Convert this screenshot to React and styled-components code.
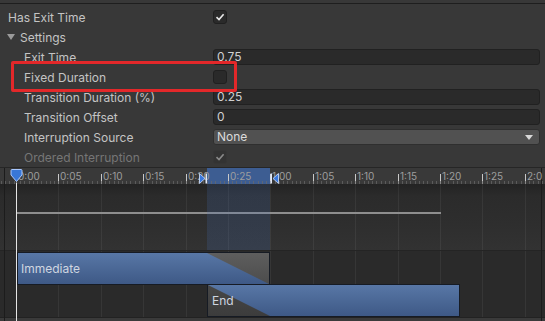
import React from "react";
import styled, { createGlobalStyle } from "styled-components";

const GlobalStyle = createGlobalStyle`
  html, body {
    margin: 0;
    padding: 0;
    background: #383838;
    overflow: hidden;
  }
  body {
    font-family: Inter, "Noto Sans", "Liberation Sans", sans-serif;
    font-size: 12px;
    color: #c4c4c4;
  }
`;

const TICK_START = 16;
const TICK_STEP = 42.4;
const TICKS = ["0:00", "0:05", "0:10", "0:15", "0:20", "0:25", "1:00", "1:05", "1:10", "1:15", "1:20", "1:25", "2:0"];

const Page = styled.div`
  width: 545px;
  height: 321px;
  position: relative;
  display: flex;
  flex-direction: column;
  overflow: hidden;
`;

const TopEdge = styled.div`
  height: 3px;
  border-bottom: 1px solid #1e1e1e;
  margin-bottom: 3px;
`;

const Inspector = styled.div`
  display: flex;
  flex-direction: column;
  padding-right: 5px;
`;

const Row = styled.div`
  height: 20px;
  display: flex;
  align-items: center;
  padding-left: ${(p) => (p.$indent ? 24 : 8)}px;
`;

const Label = styled.div`
  width: ${(p) => (p.$indent ? 189 : 205)}px;
  flex: none;
  white-space: nowrap;
  color: ${(p) => (p.$disabled ? "#767676" : "#c4c4c4")};
`;

const Foldout = styled.div`
  display: flex;
  align-items: center;
  gap: 5px;
  margin-left: -1px;
`;

const Arrow = styled.span`
  width: 0;
  height: 0;
  border-left: 4px solid transparent;
  border-right: 4px solid transparent;
  border-top: 6px solid #9a9a9a;
`;

const Field = styled.div`
  flex: 1;
  height: 16px;
  box-sizing: border-box;
  background: #2a2a2a;
  border: 1px solid #212121;
  border-radius: 3px;
  padding: 0 3px;
  line-height: 14px;
  color: #d0d0d0;
`;

const Dropdown = styled(Field)`
  background: #515151;
  border-color: #2f2f2f;
  display: flex;
  align-items: center;
  justify-content: space-between;
  color: #dcdcdc;
  padding-right: 6px;
`;

const DropArrow = styled.span`
  width: 0;
  height: 0;
  border-left: 4px solid transparent;
  border-right: 4px solid transparent;
  border-top: 5px solid #d8d8d8;
`;

const Check = styled.div`
  width: 14px;
  height: 14px;
  box-sizing: border-box;
  background: ${(p) => (p.$disabled ? "#333" : "#2a2a2a")};
  border: 1px solid ${(p) => (p.$disabled ? "#363636" : "#202020")};
  border-radius: 3px;
  display: flex;
  align-items: center;
  justify-content: center;
`;

const Highlight = styled.div`
  position: absolute;
  left: 11px;
  top: 61px;
  width: 226px;
  height: 31px;
  box-sizing: border-box;
  border: 3px solid #e3282a;
  border-radius: 2px;
  pointer-events: none;
`;

const Timeline = styled.div`
  position: relative;
  flex: 1;
  display: flex;
  flex-direction: column;
  border-top: 1px solid #262626;
  background: #2a2a2a;
`;

const Ruler = styled.div`
  position: relative;
  height: 16px;
  background: #393939;
  &::after {
    content: "";
    position: absolute;
    left: 0;
    right: 0;
    bottom: 0;
    height: 3px;
    background: repeating-linear-gradient(
      to right,
      #6a6a6a 0 1px,
      transparent 1px 4.24px
    );
    background-position: 16px 0;
    opacity: 0.7;
    z-index: 2;
  }
`;

const Tick = styled.div`
  position: absolute;
  top: 0;
  bottom: 0;
  display: flex;
  align-items: center;
  gap: 1px;
  font-size: 10px;
  color: #9e9e9e;
  z-index: 2;
  &::before {
    content: "";
    width: 1px;
    height: 10px;
    margin-top: 5px;
    background: #c8c8c8;
  }
`;

const CurveArea = styled.div`
  position: relative;
  height: 66px;
  background: linear-gradient(#232323, #2b2b2b 12px, #2e2e2e 40px, #323232);
  border-bottom: 1px solid #242424;
`;

const Curve = styled.div`
  position: absolute;
  left: 16px;
  top: 28px;
  width: 425px;
  height: 2px;
  background: #8e8e8e;
`;

const Tracks = styled.div`
  position: relative;
  height: 66px;
  background: #2a2a2a;
`;

const BottomStrip = styled.div`
  flex: 1;
  background: #3a3a3a;
  border-top: 1px solid #222;
`;

const GridLine = styled.div`
  position: absolute;
  top: 0;
  bottom: 0;
  width: 1px;
  background: rgba(255, 255, 255, 0.06);
`;

const Selection = styled.div`
  position: absolute;
  left: 207px;
  width: 63px;
  top: 0;
  height: 82px;
  z-index: 1;
  background: linear-gradient(#3d5d92 0 16px, rgba(70, 110, 180, 0.2) 16px);
  pointer-events: none;
`;

const Bar = styled.div`
  position: absolute;
  box-sizing: border-box;
  background: linear-gradient(#5877a6, #3e5986);
  border: 1px solid #161b24;
  color: #cfd6e0;
  font-size: 12px;
  padding-left: ${(p) => p.$pad}px;
  display: flex;
  align-items: center;
  overflow: hidden;
`;

const Fade = styled.div`
  position: absolute;
  top: 0;
  bottom: 0;
  right: 0;
  width: 62px;
  background: ${(p) => p.$shade};
  clip-path: ${(p) => p.$clip};
`;

const BarText = styled.span`
  position: relative;
`;

const EdgeLine = styled.div`
  position: absolute;
  top: 0;
  bottom: 0;
  width: 1px;
  background: #1c1c1c;
`;

const Playhead = styled.div`
  position: absolute;
  left: 10px;
  top: 1px;
  bottom: 0;
  width: 13px;
  display: flex;
  flex-direction: column;
  align-items: center;
  z-index: 3;
  &::after {
    content: "";
    flex: 1;
    width: 1px;
    background: #e6e6e6;
  }
`;

const Marker = styled.div`
  position: absolute;
  top: 5px;
  left: ${(p) => p.$x}px;
  z-index: 3;
  display: flex;
`;

function Checkmark({ color = "#e8e8e8" }) {
  return (
    <svg width="10" height="10" viewBox="0 0 10 10">
      <path d="M1.5 5.2 L4 7.6 L8.6 2.2" fill="none" stroke={color} strokeWidth="1.6" />
    </svg>
  );
}

function PropRow({ label, indent, disabled, children }) {
  return (
    <Row $indent={indent}>
      <Label $indent={indent} $disabled={disabled}>{label}</Label>
      {children}
    </Row>
  );
}

export default function App() {
  const xs = TICKS.map((_, i) => TICK_START + i * TICK_STEP);
  const grid = xs.slice(1).map((x) => <GridLine key={x} style={{ left: Math.round(x) }} />);

  return (
    <Page>
      <GlobalStyle />
      <TopEdge />
      <Inspector>
        <PropRow label="Has Exit Time">
          <Check>
            <Checkmark />
          </Check>
        </PropRow>
        <Row>
          <Foldout>
            <Arrow />
            <span>Settings</span>
          </Foldout>
        </Row>
        <PropRow label="Exit Time" indent>
          <Field>0.75</Field>
        </PropRow>
        <PropRow label="Fixed Duration" indent>
          <Check />
        </PropRow>
        <PropRow label="Transition Duration (%)" indent>
          <Field>0.25</Field>
        </PropRow>
        <PropRow label="Transition Offset" indent>
          <Field>0</Field>
        </PropRow>
        <PropRow label="Interruption Source" indent>
          <Dropdown>
            None
            <DropArrow />
          </Dropdown>
        </PropRow>
        <PropRow label="Ordered Interruption" indent disabled>
          <Check $disabled>
            <Checkmark color="#8a8a8a" />
          </Check>
        </PropRow>
      </Inspector>

      <Timeline>
        <Selection />
        <Ruler>
          {TICKS.map((t, i) => (
            <Tick key={t} style={{ left: Math.round(xs[i]) }}>
              {t}
            </Tick>
          ))}
        </Ruler>
        <Marker $x={199}>
          <svg width="9" height="11" viewBox="0 0 9 11">
            <path d="M0.5 0.5 L6 5.5 L0.5 10.5 Z" fill="#3a78dc" stroke="#d6e4ff" strokeWidth="0.8" />
            <rect x="6.5" y="0.5" width="1.5" height="10" fill="#e0e8f8" />
          </svg>
        </Marker>
        <Marker $x={270}>
          <svg width="9" height="11" viewBox="0 0 9 11">
            <rect x="0.5" y="0.5" width="1.5" height="10" fill="#e0e8f8" />
            <path d="M8.5 0.5 L3 5.5 L8.5 10.5 Z" fill="#3a78dc" stroke="#d6e4ff" strokeWidth="0.8" />
          </svg>
        </Marker>
        <CurveArea>
          {grid}
          <Curve />
        </CurveArea>
        <Tracks>
          {grid}
          <Bar $pad={3} style={{ left: 17, top: 1, width: 253, height: 33 }}>
            <Fade $shade="linear-gradient(#5e5e5e, #4c4c4c)" $clip="polygon(0 0, 100% 0, 100% 100%)" />
            <BarText>Immediate</BarText>
          </Bar>
          <Bar $pad={4} style={{ left: 207, top: 33, width: 253, height: 33 }}>
            <Fade
              $shade="linear-gradient(#474747, #3c3c3c)"
              $clip="polygon(0 0, 0 100%, 100% 100%)"
              style={{ left: 0, right: "auto" }}
            />
            <BarText>End</BarText>
          </Bar>
        </Tracks>
        <BottomStrip />
        <EdgeLine style={{ left: 4 }} />
        <EdgeLine style={{ left: 541 }} />
        <Playhead>
          <svg width="13" height="14" viewBox="0 0 13 14">
            <path d="M1 1.5 Q1 0.5 2 0.5 H11 Q12 0.5 12 1.5 V6 L6.5 12.5 L1 6 Z" fill="#3877d8" stroke="#a9c8ff" strokeWidth="1" />
          </svg>
        </Playhead>
      </Timeline>

      <Highlight />
    </Page>
  );
}
